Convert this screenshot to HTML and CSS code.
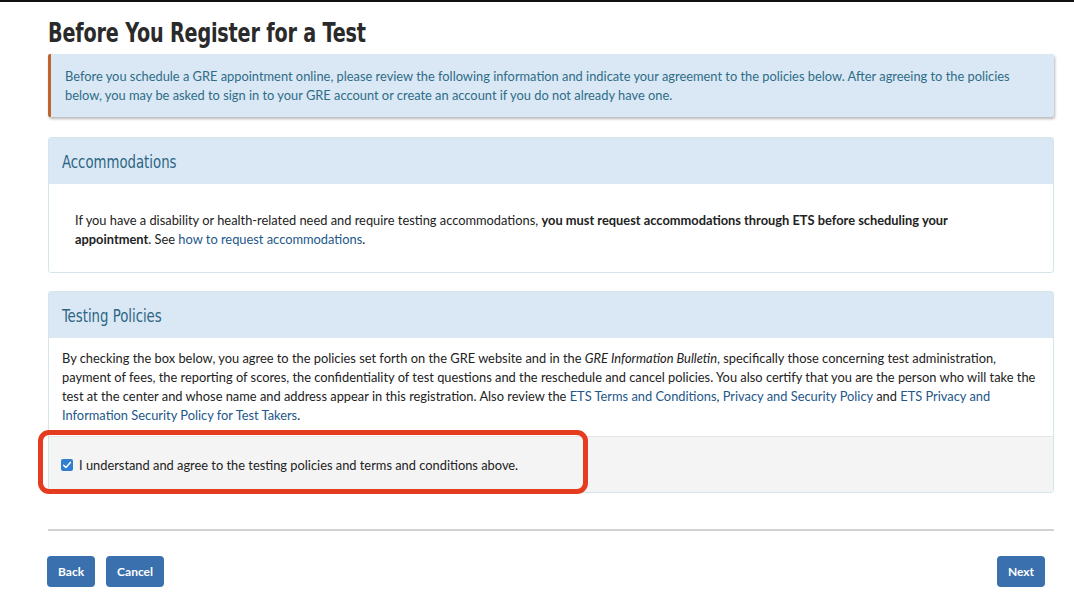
FILE: index.html
```html
<!DOCTYPE html>
<html lang="en">
<head>
<meta charset="utf-8">
<title>Before You Register for a Test</title>
<link rel="stylesheet" href="styles.css">
</head>
<body>
<div class="page">
  <h1 class="page-title"><span class="narrow">Before You Register for a Test</span></h1>

  <div class="notice">
    Before you schedule a GRE appointment online, please review the following information and indicate your agreement to the policies below. After agreeing to the policies below, you may be asked to sign in to your GRE account or create an account if you do not already have one.
  </div>

  <section class="panel">
    <h2 class="panel-head"><span class="narrow">Accommodations</span></h2>
    <div class="panel-body panel-body--inset">
      <p>If you have a disability or health-related need and require testing accommodations, <strong>you must request accommodations through ETS before scheduling your appointment</strong>. See <a href="#">how to request accommodations</a>.</p>
    </div>
  </section>

  <section class="panel">
    <h2 class="panel-head"><span class="narrow">Testing Policies</span></h2>
    <div class="panel-body">
      <p>By checking the box below, you agree to the policies set forth on the GRE website and in the <em>GRE Information Bulletin</em>, specifically those concerning test administration, payment of fees, the reporting of scores, the confidentiality of test questions and the reschedule and cancel policies. You also certify that you are the person who will take the test at the center and whose name and address appear in this registration. Also review the <a href="#">ETS Terms and Conditions</a>, <a href="#">Privacy and Security Policy</a> and <a href="#">ETS Privacy and Information Security Policy for Test Takers</a>.</p>
    </div>
    <div class="panel-foot">
      <label class="agree">
        <span class="check" aria-hidden="true">
          <svg viewBox="0 0 12 12" width="12" height="12"><path d="M2.6 6.3 L4.9 8.5 L9.4 3.4" fill="none" stroke="#fff" stroke-width="1.5" stroke-linecap="round" stroke-linejoin="round"/></svg>
        </span>
        I understand and agree to the testing policies and terms and conditions above.
      </label>
      <div class="highlight" aria-hidden="true"></div>
    </div>
  </section>

  <hr class="rule">

  <div class="actions">
    <div class="actions-left">
      <button class="btn">Back</button>
      <button class="btn">Cancel</button>
    </div>
    <button class="btn">Next</button>
  </div>
</div>
</body>
</html>
```

FILE: styles.css
```css
* { box-sizing: border-box; }

html, body {
  margin: 0;
  padding: 0;
  background: #fff;
}

body {
  border-top: 2px solid #111;
  font-family: Lato, "Open Sans", sans-serif;
  font-size: 12.85px;
  color: #222;
  height: 599px;
  overflow: hidden;
}

.page {
  padding: 0 20px 0 48px;
  width: 1074px;
}

/* condensed display type for headings */
.narrow {
  display: inline-block;
  transform: scaleX(0.82);
  transform-origin: left center;
  white-space: nowrap;
}

.page-title {
  margin: 15px 0 5px;
  height: 32px;
  font-family: "DejaVu Sans Condensed", "DejaVu Sans", sans-serif;
  font-weight: bold;
  font-size: 26px;
  line-height: 32px;
  letter-spacing: -0.2px;
  color: #2a2a2a;
}

.notice {
  background: #d9e8f4;
  border-left: 3px solid #c0652e;
  border-radius: 2px;
  box-shadow: 1px 2px 3px rgba(0, 0, 0, 0.28);
  padding: 13px 20px 12px 14px;
  line-height: 19px;
  color: #2f6c88;
  margin-bottom: 20px;
  width: 1006px;
}

.panel {
  width: 1006px;
  border: 1px solid #d6e5ea;
  border-radius: 3px;
  margin-bottom: 18px;
  position: relative;
}

.panel-head {
  margin: 0;
  background: #d9e8f4;
  height: 46px;
  padding: 0 13px;
  display: flex;
  align-items: center;
  font-family: "DejaVu Sans Condensed", "DejaVu Sans", sans-serif;
  font-weight: normal;
  font-size: 18px;
  color: #2d6584;
}

.panel-body {
  padding: 11px 14px 12px 13px;
  line-height: 18.7px;
}

.panel-body--inset {
  padding: 27px 70px 24px 26px;
}

.panel-body p { margin: 0; }

.panel-body a {
  color: #23578a;
  text-decoration: none;
}

.panel-body strong { font-weight: bold; }

.panel-foot {
  background: #f4f4f4;
  border-top: 1px solid #e4e4e4;
  height: 56px;
  padding: 0 12px;
  display: flex;
  align-items: center;
  position: relative;
}

.agree {
  display: flex;
  align-items: center;
  gap: 6px;
  color: #222;
}

.check {
  width: 12px;
  height: 12px;
  background: #2f7fd0;
  border-radius: 2px;
  display: inline-flex;
}

.highlight {
  position: absolute;
  left: -11px;
  top: -7px;
  width: 550px;
  height: 64px;
  border: 5px solid #e53b1f;
  border-radius: 11px;
  pointer-events: none;
}

.rule {
  width: 1006px;
  margin: 36px 0 0;
  border: 0;
  border-top: 2px solid #d2d2d2;
}

.actions {
  width: 997px;
  display: flex;
  justify-content: space-between;
  margin-top: 25px;
}

.actions-left {
  display: flex;
  gap: 11px;
  margin-left: -1px;
}

.btn {
  height: 31px;
  padding: 0 11px;
  background: #3a70ad;
  border: 0;
  border-radius: 4px;
  color: #fff;
  font-family: Lato, "Open Sans", sans-serif;
  font-weight: bold;
  font-size: 12px;
}
```
